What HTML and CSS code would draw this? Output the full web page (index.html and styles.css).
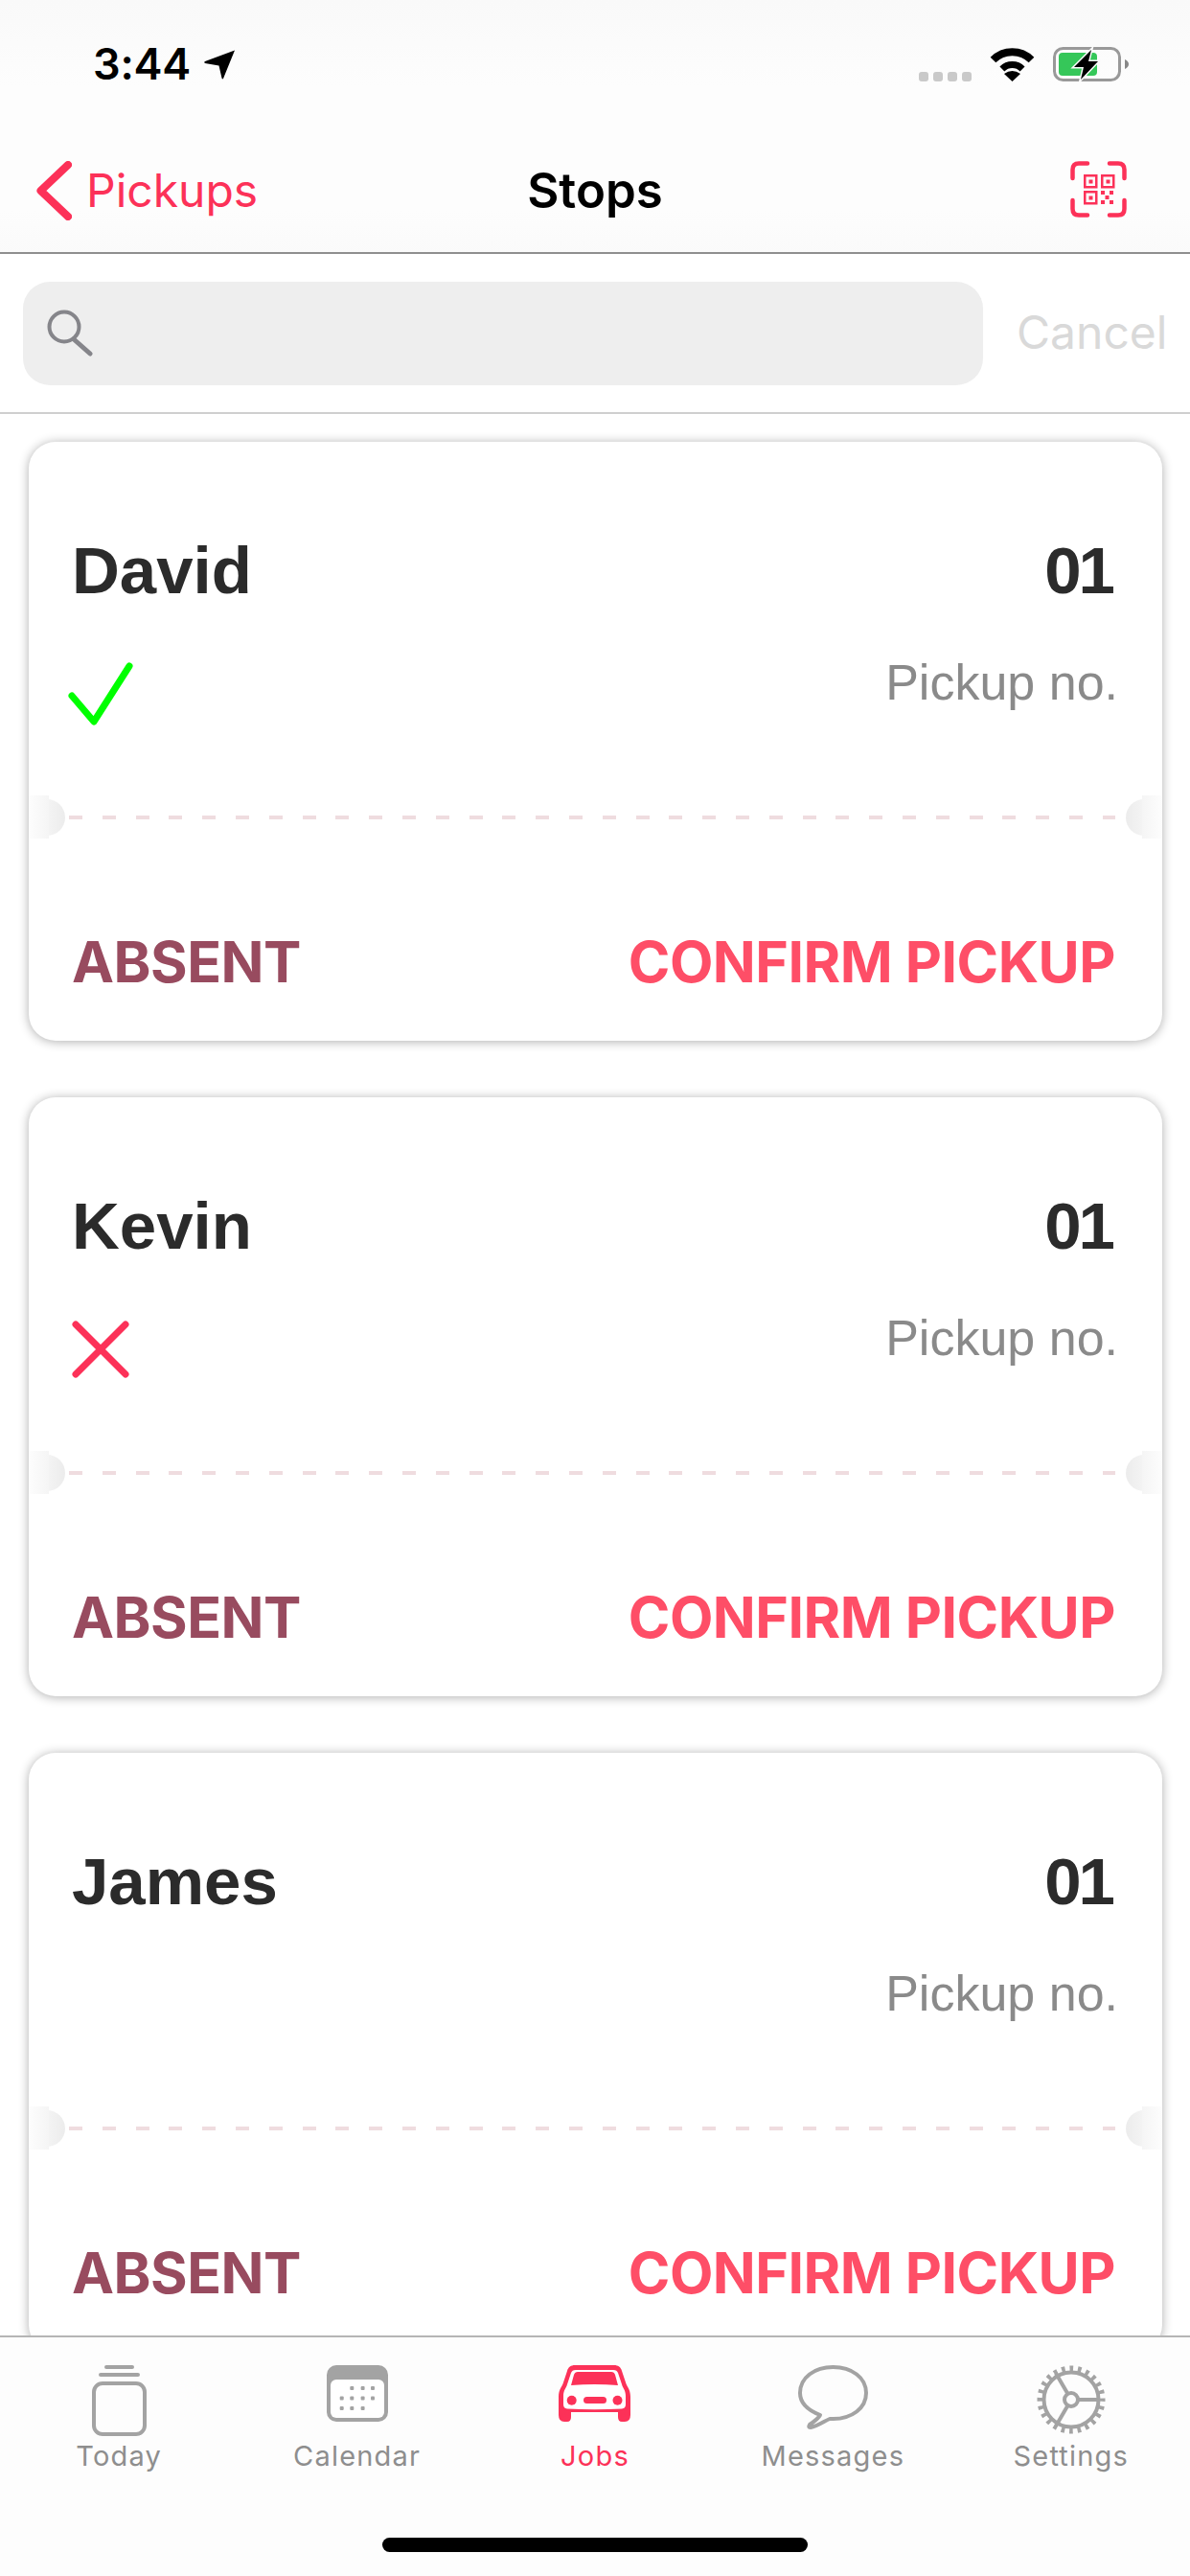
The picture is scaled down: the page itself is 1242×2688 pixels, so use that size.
FILE: index.html
```html
<!DOCTYPE html>
<html lang="en">
<head>
<meta charset="utf-8">
<title>Stops</title>
<link rel="stylesheet" href="styles.css">
</head>
<body>
<div class="app">
  <header class="header">
    <div class="status">
      <div class="status-left">
        <span class="time">3:44</span>
        <svg class="loc" width="33" height="31" viewBox="0 0 33 31"><path d="M32 0.5 L20 30 Q19 31 18.500 29.500 L15.500 16.500 L1 14 Q-0.500 13 1 12 Z" fill="#000"/></svg>
      </div>
      <div class="status-right">
        <div class="signal"><i></i><i></i><i></i><i></i></div>
        <svg class="wifi" width="47" height="36" viewBox="0 0 47 36"><path d="M3.500 13.500 A28.300 28.300 0 0 1 43.500 13.500" fill="none" stroke="#000" stroke-width="8"/><path d="M12.900 22.900 A15 15 0 0 1 34.100 22.900" fill="none" stroke="#000" stroke-width="7"/><path d="M23.500 36 L15 28 Q23.500 22 32 28 Z" fill="#000"/></svg>
        <svg class="battery" width="80" height="36" viewBox="0 0 80 36"><rect x="1.500" y="1.500" width="68" height="33" rx="9" fill="none" stroke="#999" stroke-width="3"/><path d="M75 13 Q79 15 79 18 Q79 21 75 23 Z" fill="#888"/><rect x="6" y="6" width="40" height="24" rx="4" fill="#35c759"/><path d="M40 3 L22 21 H32 L29 34 L47 15 H37 Z" fill="#000" stroke="#fbfbfb" stroke-width="3" paint-order="stroke"/></svg>
      </div>
    </div>
    <nav class="nav">
      <div class="nav-back">
        <svg width="37" height="62" viewBox="0 0 37 62"><path d="M33 4 L4.500 31 L33 58" fill="none" stroke="#fc3158" stroke-width="8" stroke-linecap="round" stroke-linejoin="round"/></svg>
        <span class="nav-back-label">Pickups</span>
      </div>
      <div class="nav-title">Stops</div>
      <div class="nav-action">
        <svg width="59" height="59" viewBox="0 0 59 59">
          <g fill="none" stroke="#fc3158" stroke-width="4.500" stroke-linecap="round">
            <path d="M18 2.500 H9 Q2.500 2.500 2.500 9 V18"/><path d="M41 2.500 H50 Q56.500 2.500 56.500 9 V18"/>
            <path d="M18 56.500 H9 Q2.500 56.500 2.500 50 V41"/><path d="M41 56.500 H50 Q56.500 56.500 56.500 50 V41"/>
          </g>
          <g fill="none" stroke="#fc3158" stroke-width="2.500">
            <rect x="15.250" y="15.250" width="12" height="12"/><rect x="33.250" y="15.250" width="12" height="12"/><rect x="15.250" y="32.250" width="12" height="12"/>
          </g>
          <g fill="#fc3158">
            <rect x="19.500" y="19.500" width="4" height="4"/><rect x="37.500" y="19.500" width="4" height="4"/><rect x="19.500" y="36.500" width="4" height="4"/>
            <rect x="32" y="31" width="4" height="4"/><rect x="41" y="31" width="4" height="4"/><rect x="36.500" y="36" width="4" height="4"/><rect x="32" y="41" width="4" height="4"/><rect x="41" y="41" width="4" height="4"/>
          </g>
        </svg>
      </div>
    </nav>
  </header>

  <div class="searchbar">
    <div class="search-field">
      <svg width="48" height="49" viewBox="0 0 48 49"><circle cx="18" cy="18" r="15.500" fill="none" stroke="#85858a" stroke-width="4"/><path d="M28 31 L45 46" fill="none" stroke="#85858a" stroke-width="5" stroke-linecap="round"/></svg>
    </div>
    <span class="search-cancel">Cancel</span>
  </div>

  <main class="list">
    <article class="card">
      <div class="card-head"><span class="card-name">David</span><span class="card-no">01</span></div>
      <div class="card-mid">
        <div class="card-state">
          <svg width="70" height="70" viewBox="0 0 70 70"><path d="M4 36 L27 63 L64 5" fill="none" stroke="#00ff00" stroke-width="7" stroke-linecap="round" stroke-linejoin="round"/></svg>
        </div>
        <span class="card-label">Pickup no.</span>
      </div>
      <div class="card-divider"><span class="notch notch-left"></span><span class="dashes"></span><span class="notch notch-right"></span></div>
      <div class="card-actions"><span class="act-absent">ABSENT</span><span class="act-confirm">CONFIRM PICKUP</span></div>
    </article>

    <article class="card">
      <div class="card-head"><span class="card-name">Kevin</span><span class="card-no">01</span></div>
      <div class="card-mid">
        <div class="card-state">
          <svg width="70" height="70" viewBox="0 0 70 70"><path d="M8 8 L60 60 M60 8 L8 60" fill="none" stroke="#fc3158" stroke-width="7" stroke-linecap="round"/></svg>
        </div>
        <span class="card-label">Pickup no.</span>
      </div>
      <div class="card-divider"><span class="notch notch-left"></span><span class="dashes"></span><span class="notch notch-right"></span></div>
      <div class="card-actions"><span class="act-absent">ABSENT</span><span class="act-confirm">CONFIRM PICKUP</span></div>
    </article>

    <article class="card">
      <div class="card-head"><span class="card-name">James</span><span class="card-no">01</span></div>
      <div class="card-mid">
        <div class="card-state"></div>
        <span class="card-label">Pickup no.</span>
      </div>
      <div class="card-divider"><span class="notch notch-left"></span><span class="dashes"></span><span class="notch notch-right"></span></div>
      <div class="card-actions"><span class="act-absent">ABSENT</span><span class="act-confirm">CONFIRM PICKUP</span></div>
    </article>
  </main>

  <footer class="tabbar">
    <div class="tabs">
      <div class="tab">
        <div class="tab-icon">
          <svg width="57" height="74" viewBox="0 0 57 74"><rect x="13" y="0" width="31" height="4" rx="2" fill="#a3a3a3"/><rect x="7" y="8" width="43" height="4" rx="2" fill="#a3a3a3"/><rect x="2" y="19" width="53" height="53" rx="9" fill="none" stroke="#a3a3a3" stroke-width="4"/></svg>
        </div>
        <span class="tab-label">Today</span>
      </div>
      <div class="tab">
        <div class="tab-icon">
          <svg width="64" height="59" viewBox="0 0 64 59"><rect width="64" height="59" rx="10" fill="#a3a3a3"/><rect x="4" y="15" width="56" height="40" rx="6" fill="#fff"/>
            <g fill="#a3a3a3"><rect x="24.300" y="22" width="4" height="4" rx="1"/><rect x="35.600" y="22" width="4" height="4" rx="1"/><rect x="46" y="22" width="4" height="4" rx="1"/><rect x="13.700" y="32.500" width="4" height="4" rx="1"/><rect x="24.300" y="32.500" width="4" height="4" rx="1"/><rect x="35.600" y="32.500" width="4" height="4" rx="1"/><rect x="46" y="32.500" width="4" height="4" rx="1"/><rect x="13.700" y="43" width="4" height="4" rx="1"/><rect x="24.300" y="43" width="4" height="4" rx="1"/><rect x="35.600" y="43" width="4" height="4" rx="1"/></g></svg>
        </div>
        <span class="tab-label">Calendar</span>
      </div>
      <div class="tab tab-active">
        <div class="tab-icon">
          <svg width="75" height="59" viewBox="0 0 75 59"><path d="M17 0 H58 C62 0 65 2 66 6 L70 18 C71 22 75 25 75 33 V52 Q75 59 69 59 H66 Q62 59 62 54 V49 H13 V54 Q13 59 9 59 H6 Q0 59 0 52 V33 C0 25 4 22 5 18 L9 6 C10 2 13 0 17 0 Z" fill="#fc3158"/><path d="M18 5 H57 C60 5 61 6 62 8 L66 20 C67 24 70 26 70 32 V41 Q70 45 66 45.500 Q37.500 47 9 45.500 Q5 45 5 41 V32 C5 26 8 24 9 20 L13 8 C14 6 15 5 18 5 Z" fill="#fff"/><path d="M20 7 H55 Q58 7 59 10 L62 21 Q37.500 19 13 21 L16 10 Q17 7 20 7 Z" fill="#fc3158"/><circle cx="13.700" cy="36.700" r="5" fill="#fc3158"/><circle cx="61.500" cy="36.700" r="5" fill="#fc3158"/><rect x="26" y="33" width="24" height="7" rx="3.500" fill="#fc3158"/></svg>
        </div>
        <span class="tab-label">Jobs</span>
      </div>
      <div class="tab">
        <div class="tab-icon">
          <svg width="73" height="67" viewBox="0 0 73 67"><path d="M23 52 C10 47 2 39 2 29 C2 13 17 2 36.500 2 C56 2 71 13 71 29 C71 45 56 56 36.500 56 L33 56 C28 58 20 64 13 65 Q10 65 12 62 C15 60 21 56 23 52 Z" fill="none" stroke="#a3a3a3" stroke-width="4" stroke-linejoin="round"/></svg>
        </div>
        <span class="tab-label">Messages</span>
      </div>
      <div class="tab">
        <div class="tab-icon">
          <svg width="72" height="72" viewBox="0 0 72 72"><g fill="none" stroke="#a3a3a3"><circle cx="36" cy="36" r="32" stroke-width="7" stroke-dasharray="3.600 4.780" stroke-dashoffset="1.800"/><circle cx="36" cy="36" r="28.500" stroke-width="4"/><circle cx="36" cy="36" r="7" stroke-width="4"/><path d="M43 36 H66 M32.500 30 L20 8.500 M32.500 42 L20 63.500" stroke-width="4"/></g></svg>
        </div>
        <span class="tab-label">Settings</span>
      </div>
    </div>
    <div class="home-indicator"></div>
  </footer>
</div>
</body>
</html>
```
FILE: styles.css
```css
* { box-sizing: border-box; }
html, body { margin: 0; padding: 0; background: #fff; }
body { width: 1242px; height: 2688px; overflow: hidden; font-family: Inter, "Liberation Sans", sans-serif; }
.app { width: 1242px; height: 2688px; display: flex; flex-direction: column; }

.header { height: 265px; flex: none; background: linear-gradient(#f9f9f9 0, #fdfdfd 90px, #fdfdfd 220px, #fafafa 264px); border-bottom: 2px solid #8f8f8f; display: flex; flex-direction: column; }
.status { height: 141px; padding: 49px 63px 0 97px; display: flex; justify-content: space-between; align-items: flex-start; }
.status-left { display: flex; align-items: center; gap: 14px; }
.time { font-weight: 600; font-size: 45px; line-height: 36px; letter-spacing: -.2px; color: #000; }
.loc { display: block; }
.status-right { display: flex; align-items: flex-end; height: 36px; }
.signal { display: flex; gap: 5px; margin-right: 19px; }
.signal i { display: block; width: 10px; height: 10px; border-radius: 3px; background: #c9c9c9; }
.wifi { display: block; margin-right: 19px; }
.battery { display: block; }

.nav { flex: 1; display: grid; grid-template-columns: 1fr auto 1fr; align-items: start; padding: 27px 38px 0; }
.nav-back { display: flex; align-items: center; gap: 15px; height: 62px; }
.nav-back svg { display: block; }
.nav-back-label { font-size: 48px; line-height: 62px; color: #fc3158; }
.nav-title { font-size: 51px; line-height: 62px; font-weight: 600; color: #000; }
.nav-action { justify-self: end; margin-right: 28px; }
.nav-action svg { display: block; }

.searchbar { height: 167px; flex: none; border-bottom: 2px solid #cfcfcf; background: #fff; display: flex; align-items: flex-start; padding: 29px 0 0 24px; gap: 35px; }
.search-field { flex: none; width: 1002px; height: 108px; border-radius: 28px; background: #eeeeee; padding: 29px 0 0 25px; }
.search-field svg { display: block; }
.search-cancel { font-size: 48px; line-height: 106px; color: #d9d9d9; white-space: nowrap; }

.list { flex: 1; min-height: 0; overflow: hidden; padding: 29px 29px 0 30px; display: flex; flex-direction: column; gap: 59px; background: #fff; }
.card { flex: none; height: 625px; border-radius: 28px; background: #fff; box-shadow: 0 1px 11px rgba(0, 0, 0, .32); padding: 0 49px 0 45px; position: relative; display: flex; flex-direction: column; }
.card-head { display: flex; justify-content: space-between; align-items: baseline; padding-top: 97px; color: #2b2b2b; font-family: "Liberation Sans", Arial, sans-serif; font-weight: 700; font-size: 69px; line-height: 76px; }
.card-name { display: block; }
.card-no { display: block; letter-spacing: -3px; margin-right: 3px; }
.card-mid { display: flex; justify-content: space-between; align-items: flex-start; height: 217px; padding-top: 48px; }
.card-state { width: 70px; margin-left: -4px; padding-top: 8px; }
.card-state svg { display: block; }
.card-label { font-family: "Liberation Sans", Arial, sans-serif; font-size: 52px; line-height: 60px; color: #8a8a8a; margin-right: -3px; }
.card-divider { position: relative; height: 4px; margin: 0 -49px 0 -45px; flex: none; }
.dashes { position: absolute; left: 42px; right: 49px; top: 0; height: 4px; background: repeating-linear-gradient(90deg, #efdcdf 0, #efdcdf 14px, transparent 14px, transparent 34.800px); }
.notch { position: absolute; top: -17px; width: 38px; height: 38px; }
.notch::before { content: ""; position: absolute; top: -4px; width: 21px; height: 45px; }
.notch-left { left: 0; border-radius: 0 19px 19px 0; background: linear-gradient(90deg, #fcfcfc, #ececec); }
.notch-left::before { left: 0; background: linear-gradient(90deg, #fdfdfd, #f5f5f5); }
.notch-right { right: 0; border-radius: 19px 0 0 19px; background: linear-gradient(270deg, #fcfcfc, #ececec); }
.notch-right::before { right: 0; background: linear-gradient(270deg, #fdfdfd, #f5f5f5); }
.card-actions { display: flex; justify-content: space-between; align-items: baseline; padding-top: 115px; font-weight: 700; font-size: 59px; line-height: 68px; letter-spacing: -.5px; }
.act-absent { color: #984b5f; }
.act-confirm { color: #fe4e67; }

.tabbar { height: 251px; flex: none; position: relative; z-index: 1; background: #fdfdfd; border-top: 2px solid #b5b5b5; }
.tabs { display: grid; grid-template-columns: repeat(5, 1fr); padding-top: 29px; }
.tab { display: flex; flex-direction: column; align-items: center; }
.tab-icon { height: 74px; display: flex; align-items: flex-start; justify-content: center; }
.tab-icon svg { display: block; }
.tab-label { margin-top: 3px; font-size: 29px; line-height: 36px; letter-spacing: 1.200px; color: #8e8e8e; }
.tab-active .tab-label { color: #fc3158; }
.home-indicator { position: absolute; left: 399px; top: 209px; width: 444px; height: 15px; border-radius: 8px; background: #000; }
```
